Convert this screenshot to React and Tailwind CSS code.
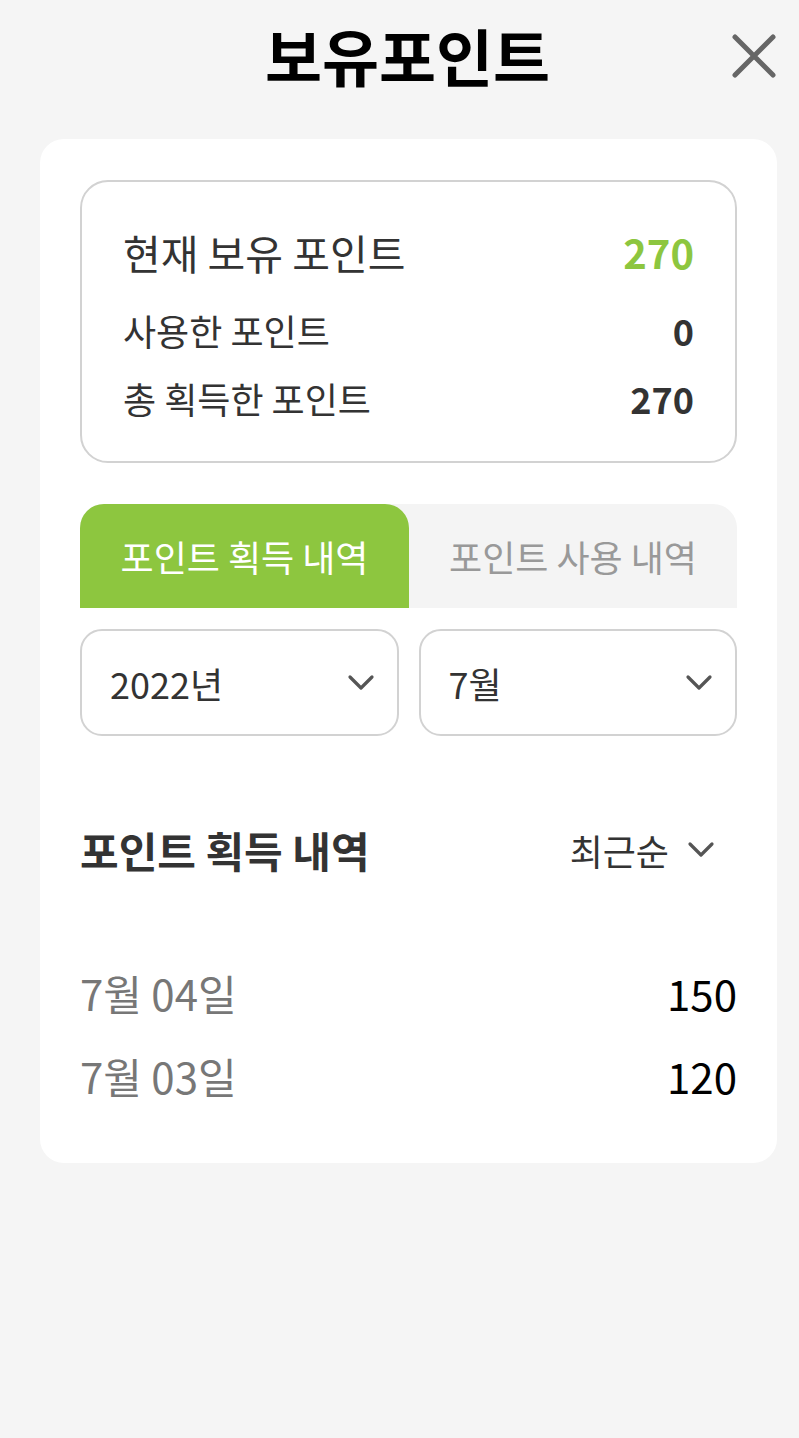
import React from "react";

const Chevron = ({ className = "" }) => (
  <svg viewBox="0 0 28 18" className={className} fill="none" stroke="#555" strokeWidth="3.2" strokeLinecap="round" strokeLinejoin="round">
    <path d="M3 3 L14 14 L25 3" />
  </svg>
);

export default function App() {
  const font = { fontFamily: '"Noto Sans CJK KR", "Noto Sans", sans-serif' };
  return (
    <div style={font} className="w-[799px] h-[1438px] bg-[#f5f5f5] relative">
      <div className="h-[139px] relative flex justify-center">
        <h1 className="text-[62px] leading-none font-bold text-black mt-[24px] ml-[16px]">보유포인트</h1>
        <svg className="absolute left-[731px] top-[33px] w-[46px] h-[46px]" viewBox="0 0 46 46" fill="none" stroke="#666" strokeWidth="5" strokeLinecap="round">
          <path d="M4 4 L42 42 M42 4 L4 42" />
        </svg>
      </div>
      <div className="mx-[40px] w-[737px] h-[1024px] bg-white rounded-[24px] px-[40px] pt-[41px]">
        <div className="h-[283px] border-2 border-[#d2d2d2] rounded-[28px] px-[41px] pt-[45px]">
          <div className="flex justify-between items-center h-[50px]">
            <span className="text-[41px] text-[#333] leading-none">현재 보유 포인트</span>
            <span className="text-[40px] font-bold text-[#8dc63f] leading-none">270</span>
          </div>
          <div className="flex justify-between items-center h-[40px] mt-[33px]">
            <span className="text-[36px] text-[#333] leading-none">사용한 포인트</span>
            <span className="text-[36px] font-bold text-[#333] leading-none">0</span>
          </div>
          <div className="flex justify-between items-center h-[40px] mt-[28px]">
            <span className="text-[36px] text-[#333] leading-none">총 획득한 포인트</span>
            <span className="text-[36px] font-bold text-[#333] leading-none">270</span>
          </div>
        </div>
        <div className="mt-[41px] flex h-[104px] bg-[#f4f4f4] rounded-t-[24px]">
          <div className="w-[329px] bg-[#8dc63f] rounded-t-[24px] flex items-center justify-center text-white text-[36px]">포인트 획득 내역</div>
          <div className="flex-1 flex items-center justify-center text-[#999] text-[36px]">포인트 사용 내역</div>
        </div>
        <div className="mt-[21px] flex gap-[20px]">
          <div className="w-[319px] h-[107px] border-2 border-[#d2d2d2] rounded-[22px] flex items-center justify-between pl-[28px] pr-[22px]">
            <span className="text-[36px] text-[#333]">2022년</span>
            <Chevron className="w-[28px] h-[18px]" />
          </div>
          <div className="w-[319px] h-[107px] border-2 border-[#d2d2d2] rounded-[22px] flex items-center justify-between pl-[28px] pr-[22px]">
            <span className="text-[36px] text-[#333]">7월</span>
            <Chevron className="w-[28px] h-[18px]" />
          </div>
        </div>
        <div className="mt-[74px] flex justify-between items-center h-[80px]">
          <span className="text-[42px] font-bold text-[#333] leading-none">포인트 획득 내역</span>
          <div className="flex items-center gap-[18px] pr-[22px]">
            <span className="text-[36px] text-[#333] leading-none">최근순</span>
            <Chevron className="w-[28px] h-[18px]" />
          </div>
        </div>
        <div className="mt-[78px] flex justify-between items-center h-[50px]">
          <span className="text-[42px] text-[#777] leading-none">7월 04일</span>
          <span className="text-[42px] text-black leading-none">150</span>
        </div>
        <div className="mt-[33px] flex justify-between items-center h-[50px]">
          <span className="text-[42px] text-[#777] leading-none">7월 03일</span>
          <span className="text-[42px] text-black leading-none">120</span>
        </div>
      </div>
    </div>
  );
}
